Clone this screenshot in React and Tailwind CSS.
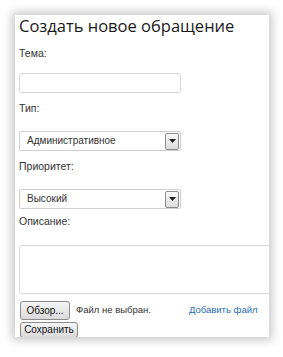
import React from 'react';

const narrow = { fontFamily: '"Liberation Sans Narrow", "Arial Narrow", "Liberation Sans", sans-serif' };

function SelectBox({ value }) {
    return (
        <div className="flex items-center w-[162px] h-[20px] border border-[#cfcfcf] rounded-[2px] bg-white pl-[7px] pr-[1px]">
            <span className="flex-1 text-[10px] text-[#333] leading-none whitespace-nowrap" style={narrow}>{value}</span>
            {/* dropdown arrow button */}
            <div className="flex items-center justify-center w-[14px] h-[17px] border border-[#8a8a8a] rounded-[2px] bg-gradient-to-b from-[#fafafa] to-[#dcdcdc]">
                <svg width="7" height="4" viewBox="0 0 7 4">
                    <path d="M0 0 H7 L3.5 4 Z" fill="#222" />
                </svg>
            </div>
        </div>
    );
}

function Label({ children, className = '' }) {
    return <div className={`text-[10.5px] leading-[14px] text-[#333] ${className}`} style={narrow}>{children}</div>;
}

function Button({ children, className = '' }) {
    return (
        <button className={`shrink-0 whitespace-nowrap border border-[#8c8c8c] rounded-[3px] bg-gradient-to-b from-[#f6f6f6] to-[#dadada] text-[10px] text-[#111] leading-none px-[3px] ${className}`}>
            {children}
        </button>
    );
}

export default function App() {
    return (
        <div className="min-h-screen bg-white pt-[15px] pl-[15px]" style={{ fontFamily: '"Liberation Sans", Arial, sans-serif' }}>
            <div className="w-[254px] h-[322px] bg-white overflow-hidden shadow-[0_0_9px_3px_rgba(0,0,0,0.22)] pl-[4px]">
                {/* Heading */}
                <h1 className="text-[16.5px] leading-[22px] text-[#1a1a1a] whitespace-nowrap" style={{ fontFamily: '"Open Sans", sans-serif' }}>
                    Создать новое обращение
                </h1>

                <Label className="mt-[9px]">Тема:</Label>
                <input className="block mt-[13px] w-[162px] h-[20px] border border-[#d8d8d8] rounded-[3px] bg-white outline-none" />

                <Label className="mt-[8px]">Тип:</Label>
                <div className="mt-[16px]">
                    <SelectBox value="Административное" />
                </div>

                <Label className="mt-[8px]">Приоритет:</Label>
                <div className="mt-[16px]">
                    <SelectBox value="Высокий" />
                </div>

                <Label className="mt-[5px]">Описание:</Label>
                <textarea className="block mt-[17px] w-[270px] h-[49px] border border-[#d8d8d8] rounded-[3px] bg-white outline-none resize-none" />

                {/* File row */}
                <div className="flex items-center mt-[7px] whitespace-nowrap">
                    <Button className="h-[19px] w-[50px] ml-[1px]">Обзор...</Button>
                    <span className="ml-[6px] text-[9.5px] text-[#333]">Файл не выбран.</span>
                    <a className="ml-[38px] text-[9.5px] text-[#1f6db5] cursor-pointer">Добавить файл</a>
                </div>
                <Button className="h-[16px] w-[58px] ml-[1px] mt-[2px] block">Сохранить</Button>
            </div>
        </div>
    );
}
